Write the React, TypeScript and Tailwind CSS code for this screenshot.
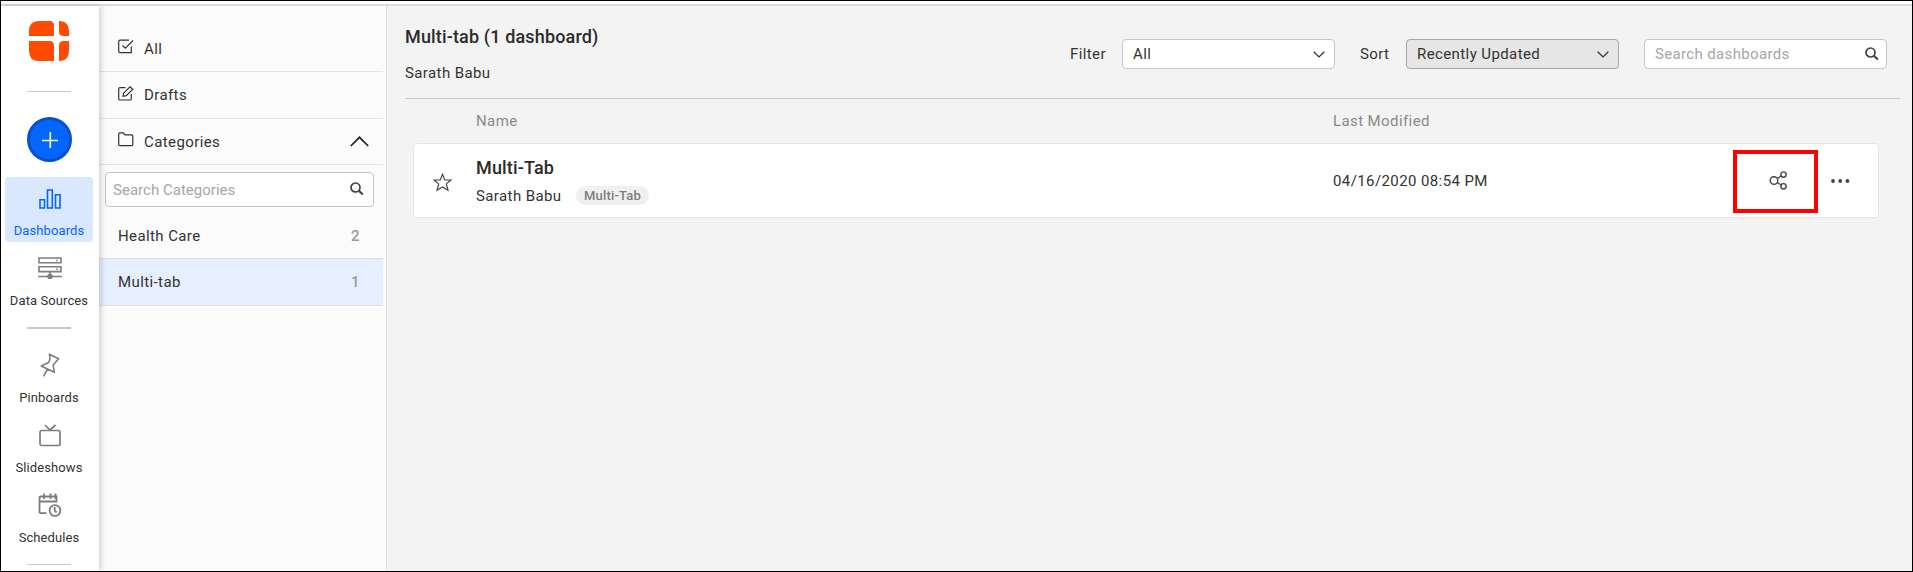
import type { ReactNode } from 'react';

const stroke = { fill: 'none', stroke: 'currentColor' } as const;

function Logo() {
  return (
    <svg width="40" height="40" viewBox="0 0 40 40" fill="#ff4a00">
      <path d="M10 0H20.500Q25 0 25 4.500V15H0V10Q0 0 10 0Z" />
      <path d="M30 0Q40 0 40 11V15H34.500Q30 15 30 10.500Z" />
      <path d="M0 20H20.500Q25 20 25 24.500V40H10Q0 40 0 30Z" />
      <path d="M34.500 20H40V29Q40 40 30 40V24.500Q30 20 34.500 20Z" />
    </svg>
  );
}

function BarsIcon() {
  return (
    <svg width="22" height="20" viewBox="0 0 22 20" {...stroke} strokeWidth="1.6">
      <path d="M1 10.800H5.500V19H1ZM8.500 1H13.300V19H8.500ZM16.500 5.800H21V19H16.500Z" />
    </svg>
  );
}

function ServerIcon() {
  return (
    <svg width="24" height="22" viewBox="0 0 24 22" {...stroke} strokeWidth="1.6">
      <path d="M1 1H23V5.800H1ZM1 9.800H23V14.600H1ZM0 19.500H9M15 19.500H24M12 15V18" />
      <path d="M10.500 17.500H13.500L15 19.500L13.500 21.500H10.500L9 19.500Z" fill="currentColor" strokeWidth="1" />
      <path d="M18 3.500H19.500M18 12.300H19.500" />
    </svg>
  );
}

function PinIcon() {
  return (
    <svg width="20" height="24" viewBox="0 0 20 24" {...stroke} strokeWidth="1.6" strokeLinejoin="round">
      <path d="M9.300 1.200L18.600 5.700L13.200 12L14.300 19.300L1.200 13L8.500 9.600Q11 5.500 9.300 1.200ZM7.400 16.200L3.600 23.300" />
    </svg>
  );
}

function TvIcon() {
  return (
    <svg width="22" height="23" viewBox="0 0 22 23" {...stroke} strokeWidth="1.7">
      <rect x="1" y="6.500" width="20" height="15" rx="1.800" />
      <path d="M6 1L11 6L16.500 1" />
    </svg>
  );
}

function ScheduleIcon() {
  return (
    <svg width="24" height="24" viewBox="0 0 24 24" {...stroke} strokeWidth="1.800">
      <path d="M8.500 20.200H3Q1.500 20.200 1.500 18.700V4.500Q1.500 3.500 2.500 3.500H18.500V9.500M1.500 8.500H18.500M6 .5V6M12.500 .5V6M17.500 .5V6" />
      <circle cx="17" cy="17.500" r="5.400" />
      <path d="M16.700 14V17.700L18.500 19.500" />
    </svg>
  );
}

function CheckSquareIcon() {
  return (
    <svg width="16" height="15" viewBox="0 0 16 15" {...stroke} strokeWidth="1.2">
      <path d="M11 1.200H2Q.7 1.200 .7 2.500V12.300Q.7 13.600 2 13.600H13.300V7.500M4.500 6.500L7.300 9.200L15 1.500" />
    </svg>
  );
}

function EditIcon() {
  return (
    <svg width="16" height="15" viewBox="0 0 16 15" {...stroke} strokeWidth="1.2">
      <path d="M7.500 1.700H2Q.7 1.700 .7 3V12.700Q.7 14 2 14H12Q13.300 14 13.300 12.700V8" />
      <path d="M5 10.300L5.600 7.200L12 .8L14.800 3.300L8.300 9.700Z" />
    </svg>
  );
}

function FolderIcon() {
  return (
    <svg width="16" height="15" viewBox="0 0 16 15" {...stroke} strokeWidth="1.2">
      <path d="M.7 12.500V2Q.7 .8 1.900 .8H5.300L7 2.800H13.600Q14.800 2.800 14.800 4V12.500Q14.800 13.600 13.600 13.600H1.900Q.7 13.600 .7 12.500Z" />
    </svg>
  );
}

function SearchIcon() {
  return (
    <svg width="14" height="14" viewBox="0 0 14 14" {...stroke} stroke="#404040">
      <circle cx="5.500" cy="5.500" r="4.500" strokeWidth="1.700" />
      <path d="M8.600 8.600L12.800 12.600" strokeWidth="2.100" />
    </svg>
  );
}

function Chevron() {
  return (
    <svg width="12" height="7" viewBox="0 0 12 7" {...stroke} strokeWidth="1.300">
      <path d="M.7 .7L6 5.900L11.300 .7" />
    </svg>
  );
}

function RailItem({ icon, label, active }: { icon: ReactNode; label: string; active?: boolean }) {
  return (
    <div
      className={
        active
          ? 'flex h-[65px] w-[88px] flex-col items-center rounded bg-[#dae8ff] text-[#0565ff]'
          : 'flex h-[65px] w-[88px] flex-col items-center text-[#7d7d7d]'
      }
    >
      <div className="flex h-[44px] items-center pl-px">{icon}</div>
      <div
        className={
          active
            ? 'text-[13px] leading-[20px] tracking-[0.1px] whitespace-nowrap'
            : 'pt-px text-[13px] leading-[20px] tracking-[0.1px] whitespace-nowrap text-[#333]'
        }
      >
        {label}
      </div>
    </div>
  );
}

function Rail() {
  return (
    <nav className="z-10 flex w-[98px] shrink-0 flex-col bg-white pl-1 shadow-[2px_0_6px_rgba(0,0,0,0.18)]">
      <div className="mt-[15px] ml-[24px]">
        <Logo />
      </div>
      <div className="mt-[30px] ml-[22px] h-px w-[44px] bg-[#c8c8c8]" />
      <button className="mt-[25px] ml-[22px] flex size-[45px] items-center justify-center rounded-full border-[3px] border-[#0552cc] bg-[#0565ff]">
        <svg width="16" height="16" viewBox="0 0 16 16" stroke="#fff" strokeWidth="1.600">
          <path d="M8.300 0V16M0 8.500H16" />
        </svg>
      </button>
      <div className="mt-[15px]">
        <RailItem icon={<BarsIcon />} label="Dashboards" active />
      </div>
      <div className="mt-[4px]">
        <RailItem icon={<ServerIcon />} label="Data Sources" />
      </div>
      <div className="mt-[16px] ml-[22px] h-[2px] w-[44px] bg-[#c8c8c8]" />
      <div className="mt-[14px]">
        <RailItem icon={<PinIcon />} label="Pinboards" />
      </div>
      <div className="mt-[5px]">
        <RailItem icon={<TvIcon />} label="Slideshows" />
      </div>
      <div className="mt-[5px]">
        <RailItem icon={<ScheduleIcon />} label="Schedules" />
      </div>
      <div className="mt-[16px] ml-[22px] h-px w-[44px] bg-[#c8c8c8]" />
    </nav>
  );
}

function Categories() {
  return (
    <aside className="flex w-[288px] shrink-0 flex-col border-r border-[#dfdfdf] bg-[#fbfbfb] pr-[3px] text-[15px] leading-[20px] tracking-[0.4px] text-[#333]">
      <div className="flex h-[66px] items-end border-b border-[#e3e3e3] pb-[12px] pl-[19px]">
        <div className="mr-[10px] mb-[5px]"><CheckSquareIcon /></div>
        <span>All</span>
      </div>
      <div className="flex h-[47px] items-end border-b border-[#e3e3e3] pb-[13px] pl-[19px]">
        <div className="mr-[10px] mb-[4px]"><EditIcon /></div>
        <span>Drafts</span>
      </div>
      <div className="flex h-[46px] items-end border-b border-[#e3e3e3] pr-[14px] pb-[12px] pl-[19px]">
        <div className="mr-[10px] mb-[5px]"><FolderIcon /></div>
        <span>Categories</span>
        <svg className="mb-[5px] ml-auto" width="19" height="11" viewBox="0 0 19 11" fill="none" stroke="#222" strokeWidth="1.700">
          <path d="M.8 10L9.500 1.300L18.200 10" />
        </svg>
      </div>
      <div className="mt-[7px] ml-[6px] flex h-[35px] w-[269px] items-center justify-between rounded-[4px] border border-[#c4c4c4] bg-white pr-[9px] pl-[7px]">
        <span className="tracking-[0.02px] text-[#a6a6a6]">Search Categories</span>
        <div className="pb-[2px]"><SearchIcon /></div>
      </div>
      <div className="mt-[6px] flex h-[45px] items-center justify-between pr-[23px] pl-[19px]">
        <span>Health Care</span>
        <span className="font-medium text-[#999]">2</span>
      </div>
      <div className="flex h-[48px] items-center justify-between border-y border-[#dddfe3] bg-[#e6efff] pr-[23px] pl-[19px]">
        <span>Multi-tab</span>
        <span className="font-medium text-[#999]">1</span>
      </div>
    </aside>
  );
}

function Toolbar() {
  return (
    <header className="flex h-[93px] border-b border-[#c8c8c8]">
      <div className="flex flex-col pt-[19px]">
        <h1 className="text-[18px] leading-[24px] font-medium tracking-[0.15px] text-[#2b2b2b]">Multi-tab (1 dashboard)</h1>
        <p className="mt-[14px] text-[15px] leading-[20px]">Sarath Babu</p>
      </div>
      <div className="mt-[33px] mr-[13px] ml-auto flex h-[30px] items-center">
        <span className="w-[52px]">Filter</span>
        <div className="flex h-[30px] w-[213px] items-center justify-between rounded-[4px] border border-[#c8c8c8] bg-white pr-[9px] pl-[10px]">
          <span>All</span>
          <Chevron />
        </div>
        <span className="ml-[25px] w-[46px]">Sort</span>
        <div className="flex h-[30px] w-[213px] items-center justify-between rounded-[4px] border border-[#a8a8a8] bg-[#e6e6e6] pr-[9px] pl-[10px]">
          <span>Recently Updated</span>
          <Chevron />
        </div>
        <div className="ml-[25px] flex h-[30px] w-[243px] items-center justify-between rounded-[4px] border border-[#c8c8c8] bg-white pr-[7px] pl-[10px]">
          <span className="tracking-[0.35px] text-[#a6a6a6]">Search dashboards</span>
          <SearchIcon />
        </div>
      </div>
    </header>
  );
}

function DashboardRow() {
  return (
    <article className="ml-[8px] flex h-[75px] w-[1466px] items-center rounded-[4px] border border-[#e5e5e5] bg-white">
      <svg className="mt-[3px] ml-[19px]" width="19" height="19" viewBox="0 0 19 19" fill="none" stroke="#444" strokeWidth="1.200">
        <path d="M9.500 1.300L11.800 7H18L13.300 10.900L15 17.300L9.500 13.900L4 17.300L5.700 10.900L1 7H7.200Z" />
      </svg>
      <div className="ml-[24px] w-[857px]">
        <h2 className="text-[18px] leading-[24px] font-medium tracking-[0.15px] text-[#2b2b2b]">Multi-Tab</h2>
        <div className="mt-[6px] flex h-[20px] items-center">
          <span className="w-[100px]">Sarath Babu</span>
          <span className="flex h-[19px] w-[73px] items-center justify-center rounded-full bg-[#f0f0f0] text-[13px] font-medium tracking-[0.2px] text-[#7d7d7d]">
            Multi-Tab
          </span>
        </div>
      </div>
      <span>04/16/2020 08:54 PM</span>
      <div className="mt-[2px] mr-[12px] ml-auto flex h-[63px] w-[85px] items-center justify-center border-4 border-[#ff0000]">
        <svg className="mb-[2px] ml-[6px]" width="19" height="19" viewBox="0 0 19 19" fill="none" stroke="#444" strokeWidth="1.400">
          <circle cx="5" cy="9.500" r="3.800" />
          <circle cx="14.500" cy="3.600" r="2.700" />
          <circle cx="14.500" cy="15.300" r="2.700" />
          <path d="M8.400 7.400L12.300 5M8.400 11.600L12.300 14" />
        </svg>
      </div>
      <svg className="mr-[28px]" width="20" height="6" viewBox="0 0 20 6" fill="#444">
        <circle cx="3" cy="3" r="1.900" />
        <circle cx="10.200" cy="3" r="1.900" />
        <circle cx="17.400" cy="3" r="1.900" />
      </svg>
    </article>
  );
}

export default function App() {
  return (
    <div className="flex h-[572px] w-[1913px] flex-col overflow-hidden border border-black bg-[#f3f3f3] font-[Roboto,sans-serif]">
      <div className="h-[5px] shrink-0 border-b-2 border-[#dcdae0] bg-white" />
      <div className="flex min-h-0 flex-1">
        <Rail />
        <Categories />
        <main className="min-w-0 flex-1 pr-[12px] pl-[18px] text-[15px] leading-[20px] tracking-[0.4px] text-[#333]">
          <Toolbar />
          <div className="flex h-[44px] items-center pl-[71px] text-[#8a8a8a]">
            <span className="w-[857px]">Name</span>
            <span>Last Modified</span>
          </div>
          <DashboardRow />
        </main>
      </div>
    </div>
  );
}
